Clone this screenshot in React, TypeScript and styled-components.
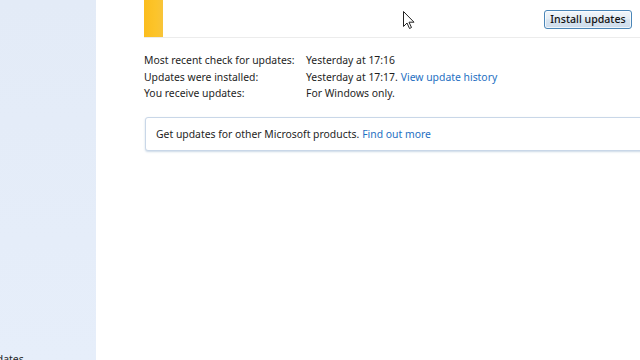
import React from "react";
import styled, { createGlobalStyle } from "styled-components";

const Global = createGlobalStyle`
  html, body { margin: 0; padding: 0; width: 640px; height: 360px; overflow: hidden; background: #fff; }
  body { font-family: "Noto Sans", "Open Sans", sans-serif; font-size: 10.4px; color: #1e1e1e; }
  #root { width: 640px; height: 360px; }
`;

const Window = styled.div`
  display: flex;
  width: 640px;
  height: 360px;
  position: relative;
  overflow: hidden;
`;

const Sidebar = styled.aside`
  width: 96px;
  flex: none;
  background: linear-gradient(180deg, #e3ebf7 0%, #e6eefa 100%);
  display: flex;
  flex-direction: column;
  justify-content: flex-end;
  overflow: hidden;
`;

const SideLink = styled.div`
  white-space: nowrap;
  margin-left: -62px;
  line-height: 12px;
  margin-bottom: -5px;
  color: #1e1e1e;
`;

const Main = styled.main`
  flex: 1;
  padding-left: 48px;
  display: flex;
  flex-direction: column;
  overflow: hidden;
`;

const StatusPanel = styled.div`
  height: 37px;
  display: flex;
  align-items: flex-start;
  border-bottom: 1px solid #ececec;
`;

const Stripe = styled.div`
  width: 19px;
  height: 37px;
  background: linear-gradient(90deg, #fbbd1e 0%, #fcc42a 60%, #f8c43a 100%);
`;

const Spacer = styled.div`
  flex: 1;
`;

const Button = styled.button`
  margin-top: 10px;
  margin-right: 8px;
  width: 88px;
  height: 19px;
  border: 1px solid #4a86b8;
  border-radius: 3px;
  background: linear-gradient(180deg, #f2f6fa 0%, #e4edf5 45%, #d6e3ef 55%, #cddced 100%);
  box-shadow: inset 0 0 0 1px rgba(255, 255, 255, 0.7);
  font-family: inherit;
  font-size: 10.6px;
  font-weight: 500;
  color: #111;
  padding: 0;
  line-height: 15px;
`;

const InfoGrid = styled.div`
  display: grid;
  grid-template-columns: 162px auto;
  row-gap: 1.5px;
  margin-top: 15px;
  line-height: 15px;
`;

const Label = styled.div``;
const Value = styled.div``;

const Link = styled.span`
  color: #1e6fc2;
  margin-left: 3px;
`;

const Notice = styled.div`
  margin-top: 16px;
  margin-left: 1px;
  margin-right: -12px;
  height: 32px;
  border: 1px solid #c9d7e8;
  border-radius: 3px;
  box-shadow: 0 1px 2px rgba(140, 170, 200, 0.45);
  display: flex;
  align-items: center;
  padding-left: 10px;
  background: #fff;
`;

const Cursor = styled.svg`
  position: absolute;
  left: 403px;
  top: 11px;
`;

export default function App() {
  return (
    <>
      <Global />
      <Window>
        <Sidebar>
          <SideLink>Installed Updates</SideLink>
        </Sidebar>
        <Main>
          <StatusPanel>
            <Stripe />
            <Spacer />
            <Button>Install updates</Button>
          </StatusPanel>
          <InfoGrid>
            <Label>Most recent check for updates:</Label>
            <Value>Yesterday at 17:16</Value>
            <Label>Updates were installed:</Label>
            <Value>
              Yesterday at 17:17.<Link>View update history</Link>
            </Value>
            <Label>You receive updates:</Label>
            <Value>For Windows only.</Value>
          </InfoGrid>
          <Notice>
            Get updates for other Microsoft products.<Link>Find out more</Link>
          </Notice>
        </Main>
        <Cursor width="12" height="19" viewBox="0 0 12 19">
          <path d="M0.5 0.5 L0.5 15.5 L4 12 L6.5 17.5 L8.5 16.5 L6 11.2 L11 11.2 Z" fill="#fff" stroke="#222" strokeWidth="1" strokeLinejoin="round" />
        </Cursor>
      </Window>
    </>
  );
}
